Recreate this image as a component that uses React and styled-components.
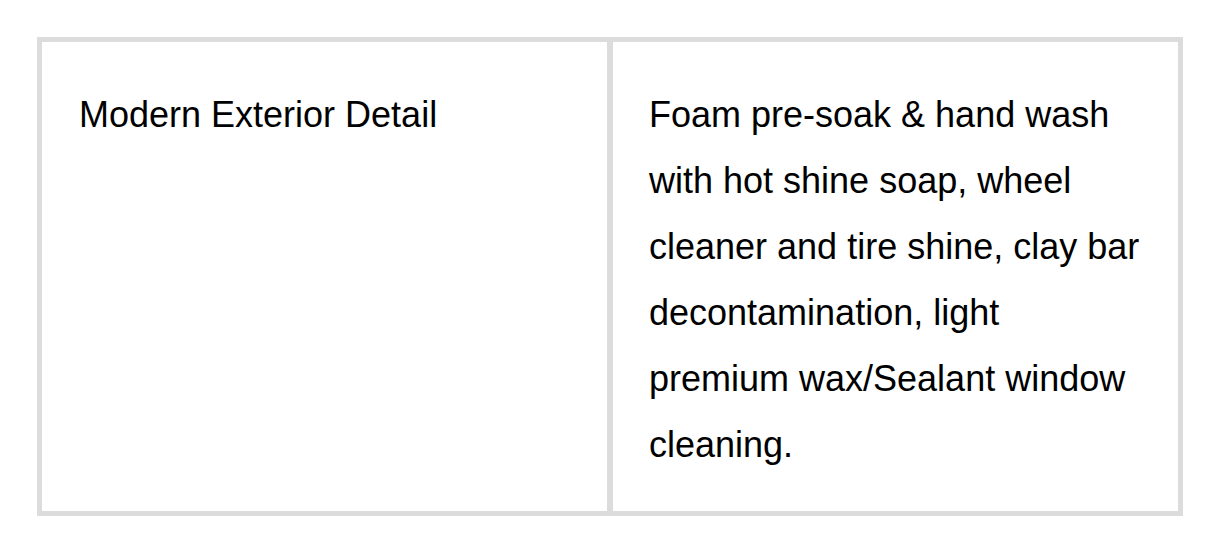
import React from "react";
import styled, { createGlobalStyle } from "styled-components";

const GlobalStyle = createGlobalStyle`
    body{
        margin: 0;
        background: #fff;
        font-family: "Liberation Sans", Arial, sans-serif;
        color: #000;
    }
`;

const Page = styled.div`
    padding: 37px 31px 26px 37px;
`;

const Table = styled.div`
    display: grid;
    grid-template-columns: 571px 1fr;
    border: 5px solid #dcdcdc;
    width: 1146px;
    box-sizing: border-box;
`;

const Cell = styled.div`
    padding: 40px 36px 33px ${({divider}) => divider ? "37px" : "36px"};
    font-size: 36px;
    line-height: 66px;
    border-right: ${({divider}) => divider ? "6px solid #dcdcdc" : "none"};
`;

const rows = [
    {
        name: "Modern Exterior Detail",
        desc: "Foam pre-soak & hand wash with hot shine soap, wheel cleaner and tire shine, clay bar decontamination, light premium wax/Sealant window cleaning."
    }
];

const App = () => {
    return (<>
        <GlobalStyle/>
        <Page>
            {rows.map((row) => (
                <Table key={row.name}>
                    <Cell divider>{row.name}</Cell>
                    <Cell>{row.desc}</Cell>
                </Table>
            ))}
        </Page>
    </>)
}

export default App;
